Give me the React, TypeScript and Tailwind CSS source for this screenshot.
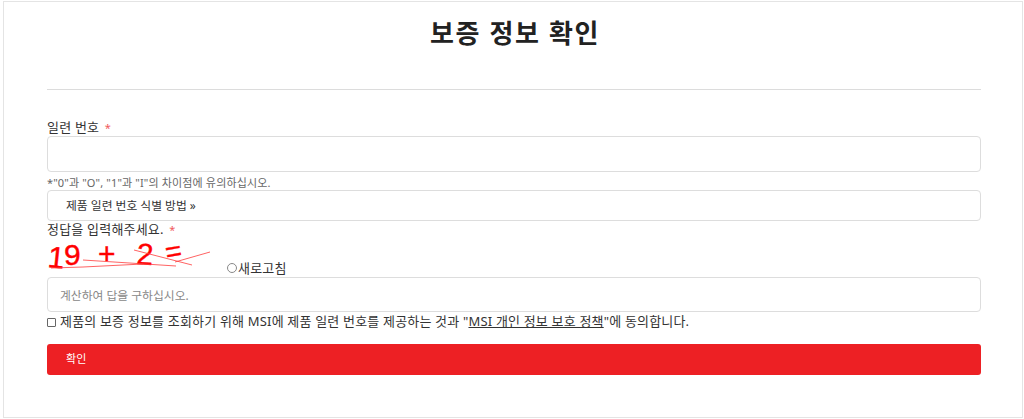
const FONT = "font-['Noto_Sans','Noto_Sans_CJK_KR',sans-serif]";

function RequiredMark() {
  return <span className="ml-[2px] text-[11px] text-[#f0595c]">*</span>;
}

function Captcha() {
  return (
    <svg width="180" height="38" viewBox="0 0 180 38" className="shrink-0 overflow-visible">
      <g fill="#ff0000" stroke="#ff0000" strokeWidth="0.4" fontFamily="'Liberation Sans', sans-serif">
        <text x="0" y="28" fontSize="30" transform="rotate(6 0 28)">1</text>
        <text x="17" y="26" fontSize="30">9</text>
        <text x="51" y="25" fontSize="30">+</text>
        <text x="89" y="25" fontSize="30" transform="rotate(4 89 25)">2</text>
        <text x="120" y="23" fontSize="28" transform="rotate(-10 120 23)">=</text>
      </g>
      <g stroke="#ff3b3b" strokeWidth="0.8" fill="none">
        <path d="M36 21 L129 27" />
        <path d="M4 29 L36 28 L96 25" />
        <path d="M87 11 L145 26" />
        <path d="M128 23 L163 13" />
      </g>
    </svg>
  );
}

export default function App() {
  return (
    <div className={`${FONT} h-[419px] w-[1024px] overflow-hidden bg-white pl-[3px] pt-px text-[13px] tracking-[0.2px] text-[#333]`}>
      <div className="h-[417px] w-[1020px] border border-[#e4e4e4] pl-[43px] pr-[41px]">
        <h1 className="flex h-[63px] items-center justify-center pl-[2px] text-[26px] font-bold tracking-[1.6px] text-[#222]">
          보증 정보 확인
        </h1>
        <hr className="mt-[24px] border-[#dcdcdc]" />

        <label className="mt-[29px] block h-[17px] leading-[17px]">
          일련 번호 <RequiredMark />
        </label>
        <input
          type="text"
          className="block h-[36px] w-full rounded border border-[#ddd] bg-white px-3"
        />
        <p className="mt-[4px] h-[14px] text-[11px] leading-[14px] tracking-[0.15px] text-[#666]">
          *"0"과 "O", "1"과 "I"의 차이점에 유의하십시오.
        </p>
        <div className="flex h-[31px] items-center rounded border border-[#ddd] pl-[18px] text-[11.8px] tracking-normal">
          제품 일련 번호 식별 방법 »
        </div>

        <label className="block h-[17px] leading-[17px]">
          정답을 입력해주세요. <RequiredMark />
        </label>
        <div className="flex h-[39px] items-end">
          <Captcha />
          <span className="flex items-center pb-px leading-[16px]">
            <span className="mr-px h-[10px] w-[10px] rounded-full border border-[#888]" />
            새로고침
          </span>
        </div>
        <input
          type="text"
          placeholder="계산하여 답을 구하십시오."
          className="block h-[35px] w-full rounded border border-[#ddd] bg-white px-3 text-[11.8px] tracking-normal placeholder:text-[#888]"
        />
        <label className="mt-px flex h-[18px] items-center text-[13px] tracking-[0.18px]">
          <input
            type="checkbox"
            className="mr-[4px] h-[9px] w-[9px] appearance-none rounded-[1px] border border-[#666] bg-white"
          />
          <span>
            제품의 보증 정보를 조회하기 위해 MSI에 제품 일련 번호를 제공하는 것과 "
            <a className="underline">MSI 개인 정보 보호 정책</a>"에 동의합니다.
          </span>
        </label>
        <button
          type="button"
          className="mt-[13px] block h-[31px] w-full rounded-[3px] bg-[#ed2024] pl-[19px] text-left text-[11px] text-white"
        >
          확인
        </button>
      </div>
    </div>
  );
}
